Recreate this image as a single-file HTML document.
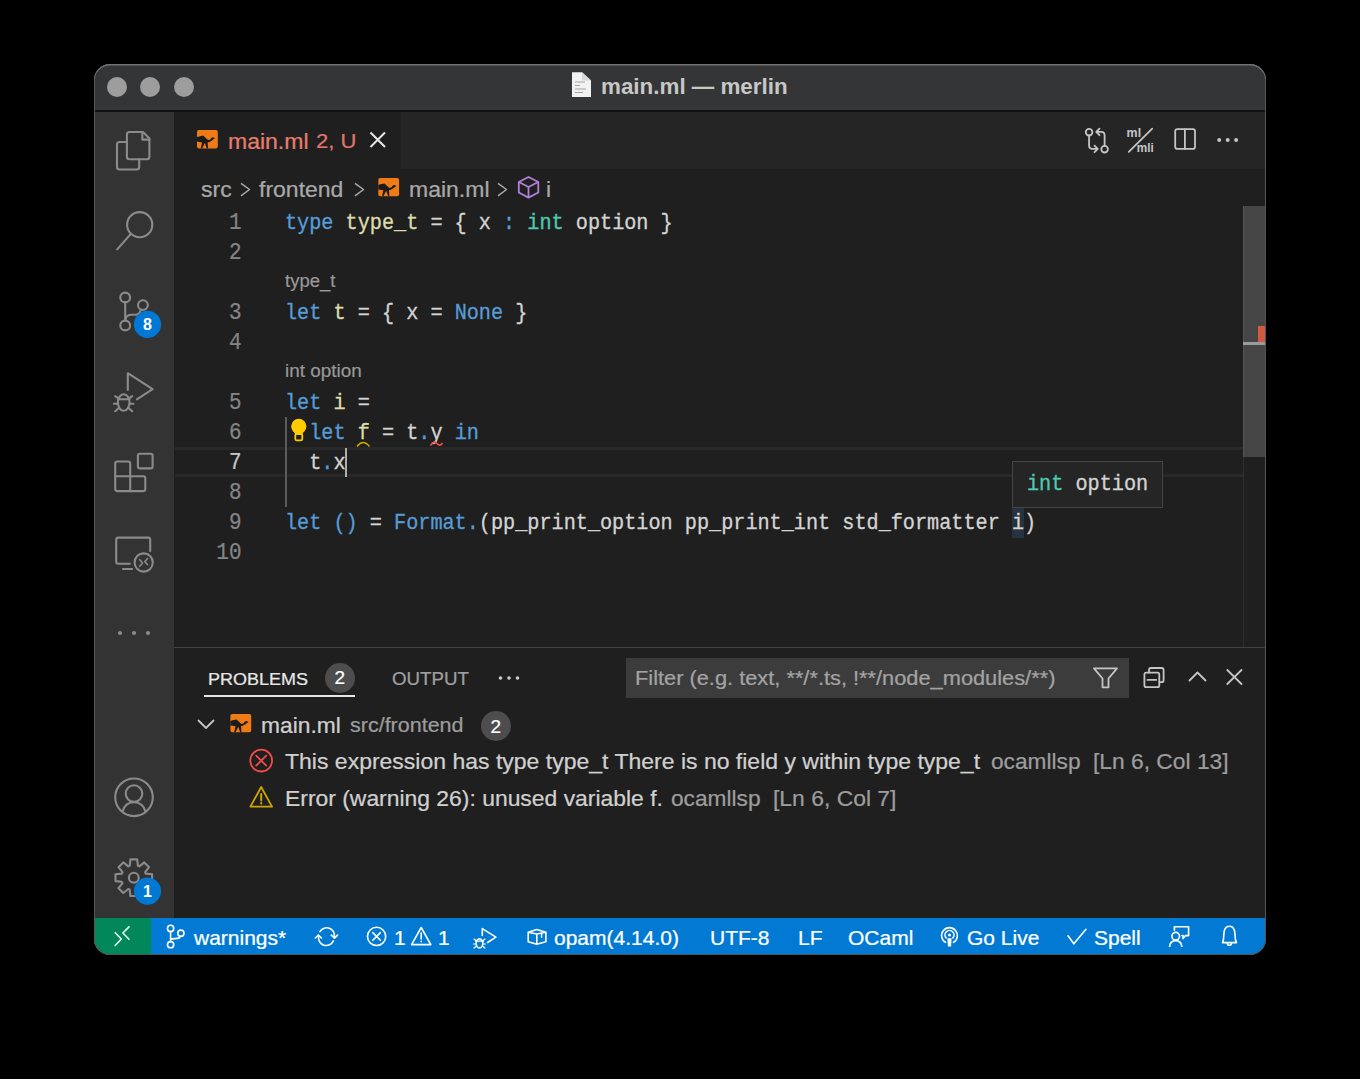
<!DOCTYPE html>
<html><head><meta charset="utf-8">
<style>
*{margin:0;padding:0;box-sizing:border-box}
html,body{width:1360px;height:1079px;background:#000;overflow:hidden;font-family:"Liberation Sans",sans-serif}
.a{position:absolute;white-space:pre}
#win{position:absolute;left:94px;top:64px;width:1172px;height:891px;border-radius:16px;overflow:hidden;background:#1f1f1f}
#wborder{position:absolute;left:94px;top:64px;width:1172px;height:891px;border-radius:16px;box-shadow:inset 0 1.5px 0 #737373, inset 0 0 0 1px #565656;pointer-events:none}
#title{position:absolute;left:0;top:0;width:1172px;height:48px;background:#343536;border-bottom:2px solid #111111}
.tl{position:absolute;top:13px;width:20px;height:20px;border-radius:50%;background:#9d9d9d}
#act{position:absolute;left:0;top:48px;width:80px;height:806px;background:#333333}
#tabs{position:absolute;left:80px;top:48px;width:1092px;height:57px;background:#252526}
#tab{position:absolute;left:0;top:0;width:227px;height:57px;background:#1f1f1f}
#status{position:absolute;left:0;top:854px;width:1172px;height:37px;background:#027ad3}
#remote{position:absolute;left:0;top:0;width:57px;height:37px;background:#02875b}
.code{position:absolute;transform:scaleY(1.12);transform-origin:0 20.4px;-webkit-text-stroke:0.3px currentColor;font-family:"Liberation Mono",monospace;font-size:20.2px;line-height:30px;color:#d4d4d4;white-space:pre}
.ln{position:absolute;font-family:"Liberation Mono",monospace;font-size:20.2px;line-height:30px;color:#858585;text-align:right;width:60px;left:181.5px;transform:translate(-0.5px,1px) scale(1.04,1.22);transform-origin:100% 20.3px;-webkit-text-stroke:0.2px currentColor}
.kw{color:#569cd6}.fn{color:#dcdcaa}.ty{color:#4ec9b0}.cn{color:#569cd6}
.lens{position:absolute;-webkit-text-stroke:0.2px currentColor;font-size:18.5px;line-height:18.5px;color:#999999;left:285px;white-space:pre}
.ui{position:absolute;white-space:pre;transform:scaleY(0.95);transform-origin:0 calc(11px + 0.3465em);-webkit-text-stroke:0.25px currentColor;font-size:22px;line-height:22px;color:#cccccc}
.st{position:absolute;white-space:pre;transform:scaleY(0.95);transform-origin:0 calc(10.5px + 0.3465em);-webkit-text-stroke:0.25px currentColor;font-size:21px;line-height:21px;color:#ffffff}
</style></head><body>
<div id="win">
  <div id="title">
    <div class="tl" style="left:13px"></div>
    <div class="tl" style="left:46px"></div>
    <div class="tl" style="left:80px"></div>
  </div>
  <div id="act"></div>
  <div id="tabs"><div id="tab"></div></div>
  <div id="status"><div id="remote"></div></div>
</div>

<!-- title text -->
<div class="a" style="left:601px;top:75.8px;font-size:22.4px;line-height:22px;font-weight:bold;color:#c7c7c7">main.ml — merlin</div>

<!-- tab -->
<div class="ui" style="left:228px;top:130px;font-size:23px;color:#e87d6e">main.ml</div>
<div class="ui" style="left:316px;top:129.5px;color:#e0756b">2, U</div>

<!-- breadcrumbs -->
<div class="ui" style="left:201px;top:177.5px;font-size:23px;color:#a9a9a9">src</div>
<div class="ui" style="left:259px;top:177.5px;font-size:23px;color:#a9a9a9">frontend</div>
<div class="ui" style="left:409px;top:177.5px;font-size:23px;color:#a9a9a9">main.ml</div>
<div class="ui" style="left:546px;top:177.5px;font-size:23px;color:#a9a9a9">i</div>

<!-- current line highlight -->
<div class="a" style="left:175px;top:447px;width:1068px;height:30px;border-top:3px solid #282828;border-bottom:3px solid #282828"></div>
<!-- indent guide -->
<div class="a" style="left:285px;top:417px;width:2px;height:90px;background:#5c5c5c"></div>
<div class="a" style="left:1011.5px;top:508px;width:12px;height:30px;background:#253240"></div>

<!-- line numbers -->
<div class="ln" style="top:207.6px">1</div>
<div class="ln" style="top:237.6px">2</div>
<div class="ln" style="top:297.6px">3</div>
<div class="ln" style="top:327.6px">4</div>
<div class="ln" style="top:387.6px">5</div>
<div class="ln" style="top:417.6px">6</div>
<div class="ln" style="top:447.6px;color:#c6c6c6">7</div>
<div class="ln" style="top:477.6px">8</div>
<div class="ln" style="top:507.6px">9</div>
<div class="ln" style="top:537.6px">10</div>

<!-- code -->
<div class="code" style="left:285px;top:208.6px"><span class="kw">type</span> <span class="fn">type_t</span> = { x <span class="kw">:</span> <span class="ty">int</span> option }</div>
<div class="lens" style="top:272px">type_t</div>
<div class="code" style="left:285px;top:298.6px"><span class="kw">let</span> <span class="fn">t</span> = { x = <span class="cn">None</span> }</div>
<div class="lens" style="top:362px;font-size:18.9px">int option</div>
<div class="code" style="left:285px;top:388.6px"><span class="kw">let</span> <span class="fn">i</span> =</div>
<div class="code" style="left:285px;top:418.6px">  <span class="kw">let</span> <span class="fn">f</span> = t<span class="kw">.</span>y <span class="kw">in</span></div>
<div class="code" style="left:285px;top:448.6px">  t<span class="kw">.</span>x</div>
<div class="code" style="left:285px;top:508.6px"><span class="kw">let</span> <span class="kw">()</span> = <span class="kw">Format.</span>(pp_print_option pp_print_int std_formatter i)</div>
<!-- cursor -->
<div class="a" style="left:345px;top:447.5px;width:1.6px;height:29px;background:#aeafad"></div>

<!-- hover -->
<div class="a" style="left:1012px;top:461px;width:151px;height:47px;background:#252526;border:1px solid #454545"></div>
<div class="code" style="left:1027px;top:470px"><span class="ty">int</span> option</div>

<!-- scrollbar -->
<div class="a" style="left:1243px;top:457px;width:1px;height:190px;background:#2e2e2e"></div>
<div class="a" style="left:1243px;top:206px;width:23px;height:251px;background:#454545;border-left:1px solid #555"></div>
<div class="a" style="left:1243px;top:342px;width:23px;height:3px;background:#9a9a9a"></div>
<div class="a" style="left:1258px;top:326px;width:8px;height:16px;background:#d25a41"></div>

<!-- panel -->
<div class="a" style="left:174px;top:647px;width:1092px;height:1px;background:#414141"></div>
<div class="ui" style="left:208px;top:669.5px;font-size:18px;line-height:18px;color:#e7e7e7">PROBLEMS</div>
<div class="a" style="left:325px;top:662.5px;width:30px;height:30px;border-radius:50%;background:#4d4d4d"></div>
<div class="ui" style="left:334.5px;top:668px;font-size:19px;line-height:19px;color:#ffffff">2</div>
<div class="a" style="left:204px;top:695px;width:151px;height:2px;background:#e7e7e7"></div>
<div class="ui" style="left:392px;top:669.5px;font-size:18.7px;line-height:18px;color:#a0a0a0">OUTPUT</div>
<div class="a" style="left:626px;top:658px;width:503px;height:40px;background:#3c3c3c"></div>
<div class="ui" style="left:635px;top:667px;font-size:21.8px;line-height:21px;color:#a3a3a3">Filter (e.g. text, **/*.ts, !**/node_modules/**)</div>

<div class="ui" style="left:261px;top:713.5px;font-size:22.8px;color:#d0d0d0">main.ml</div>
<div class="ui" style="left:350px;top:715px;font-size:21.5px;line-height:20px;color:#9d9d9d">src/frontend</div>
<div class="a" style="left:481px;top:711px;width:30px;height:30px;border-radius:50%;background:#4d4d4d"></div>
<div class="ui" style="left:490.5px;top:716.5px;font-size:19px;line-height:19px;color:#ffffff">2</div>

<div class="ui" style="left:285px;top:750px;font-size:23px;color:#d0d0d0">This expression has type type_t There is no field y within type type_t</div>
<div class="ui" style="left:991px;top:750px;font-size:22.7px;color:#9d9d9d">ocamllsp</div>
<div class="ui" style="left:1093px;top:750px;font-size:22.8px;color:#9d9d9d">[Ln 6, Col 13]</div>
<div class="ui" style="left:285px;top:787px;font-size:22.9px;color:#d0d0d0">Error (warning 26): unused variable f.</div>
<div class="ui" style="left:671px;top:787px;font-size:22.7px;color:#9d9d9d">ocamllsp</div>
<div class="ui" style="left:773px;top:787px;font-size:22.9px;color:#9d9d9d">[Ln 6, Col 7]</div>

<!-- status bar text -->
<div class="st" style="left:194px;top:927px">warnings*</div>
<div class="st" style="left:394px;top:927px">1</div>
<div class="st" style="left:438px;top:927px">1</div>
<div class="st" style="left:554px;top:927px">opam(4.14.0)</div>
<div class="st" style="left:710px;top:927px">UTF-8</div>
<div class="st" style="left:798px;top:927px">LF</div>
<div class="st" style="left:848px;top:927px">OCaml</div>
<div class="st" style="left:967px;top:927px">Go Live</div>
<div class="st" style="left:1094px;top:927px">Spell</div>


<svg class="a" style="left:0;top:0" width="1360" height="1079" viewBox="0 0 1360 1079">
<defs>
<g id="camel"><rect x="0" y="0" width="20.8" height="18.3" rx="1.8" fill="#ef7a16"/><path d="M0,7 L2.1,6.3 L6.1,5.4 L11,10 L13,9.6 L14.6,7.6 L15.9,7.1 L18.1,8.1 L16.6,9 L14.6,10.6 L12.3,11.8 L10.6,12.3 L11.1,18.3 L9.8,18.3 L7.9,12.8 L5.1,18.3 L3.8,18.3 L5.1,12.3 L0,11.5 Z" fill="#1b1b1b"/></g>
</defs>
<!-- title doc icon -->
<path d="M572,72.3 H582 L591,80.5 V97 H572 Z" fill="#f2f2f2"/>
<path d="M582,72.3 V80.5 H591" fill="#d8d8d8"/>
<g stroke="#9a9a9a" stroke-width="0.9"><path d="M575,82 H585 M575,85.5 H580 M575,89 H586 M575,92.5 H583"/></g>

<!-- activity bar icons -->
<g fill="none" stroke="#8b8b8b" stroke-width="2.1" stroke-linejoin="round" stroke-linecap="round">
 <path d="M129.4,132 H143 L149.4,138.4 V156.8 Q149.4,159.3 146.9,159.3 H129.4 Q126.9,159.3 126.9,156.8 V134.5 Q126.9,132 129.4,132 Z"/>
 <path d="M142.3,132 V139.6 H149.4"/>
 <path d="M126.9,142 H119.5 Q117,142 117,144.5 V167 Q117,169.5 119.5,169.5 H136.7 Q139.2,169.5 139.2,167 V159.3"/>
 <circle cx="139.7" cy="224.7" r="12.6"/>
 <path d="M130.2,234.6 L117.2,249.4"/>
 <circle cx="125.2" cy="297.5" r="4.9"/>
 <circle cx="125.2" cy="325.5" r="4.9"/>
 <circle cx="142.9" cy="305.1" r="4.9"/>
 <path d="M125.2,302.4 V320.6"/>
 <path d="M125.5,319.5 Q126,314.8 132,314.8 H135.5 Q139,314.8 141,309.8"/>
 <path d="M127.8,389.9 V373.2 L152.6,389.1 L136.9,399.3"/>
 <ellipse cx="123.7" cy="402.5" rx="5.8" ry="8.2"/>
 <path d="M118,399.3 H129.5 M115.2,396.1 L118.6,398.6 M132.2,396.1 L128.8,398.6 M114,403.8 H117.6 M133.4,403.8 H129.8 M115.2,411.2 L118.6,408.3 M132.2,411.2 L128.8,408.3"/>
 <path d="M117.2,461.5 H128.2 Q130.2,461.5 130.2,463.5 V476.2 H143.3 Q145.3,476.2 145.3,478.2 V489.1 Q145.3,491.1 143.3,491.1 H117.2 Q115.2,491.1 115.2,489.1 V463.5 Q115.2,461.5 117.2,461.5 Z"/>
 <path d="M115.2,476.2 H130.2 V491.1"/>
 <rect x="137.9" y="453.7" width="14.7" height="14.7" rx="2"/>
 <path d="M129.7,563.7 H118.2 Q116.2,563.7 116.2,561.7 V539.6 Q116.2,537.6 118.2,537.6 H148.2 Q150.2,537.6 150.2,539.6 V551.1"/>
 <path d="M123,569 H132.1"/>
 <circle cx="143.7" cy="562.5" r="9.1"/>
 <path d="M139.7,559.7 L142.6,563 L139.7,566.3 M147.6,558.5 L144.8,561.6 L147.6,564.7" stroke-width="1.6"/>
 <circle cx="134" cy="797.3" r="18.8"/>
 <circle cx="134" cy="793.6" r="8.3"/>
 <path d="M122.6,811.5 Q125,802.2 134,802.2 Q143,802.2 145.4,811.5"/>
 <path d="M129.7,865.8 L130.4,859.4 L137.2,859.4 L137.9,865.8 L139.3,866.4 L144.3,862.4 L149.1,867.2 L145.1,872.2 L145.7,873.6 L152.1,874.3 L152.1,881.1 L145.7,881.8 L145.1,883.2 L149.1,888.2 L144.3,893.0 L139.3,889.0 L137.9,889.6 L137.2,896.0 L130.4,896.0 L129.7,889.6 L128.3,889.0 L123.3,893.0 L118.5,888.2 L122.5,883.2 L121.9,881.8 L115.5,881.1 L115.5,874.3 L121.9,873.6 L122.5,872.2 L118.5,867.2 L123.3,862.4 L128.3,866.4Z"/>
 <circle cx="133.8" cy="877.7" r="4.9"/>
</g>
<g fill="#8b8b8b"><circle cx="120" cy="633" r="2.1"/><circle cx="134" cy="633" r="2.1"/><circle cx="148" cy="633" r="2.1"/></g>
<!-- badges -->
<circle cx="147.5" cy="324.4" r="13.6" fill="#0078d4"/>
<circle cx="147.5" cy="891.1" r="13.6" fill="#0078d4"/>

<!-- tab camel + close -->
<use href="#camel" x="197" y="130.1"/>
<path d="M370.5,132.5 L385,147 M385,132.5 L370.5,147" stroke="#e8e8e8" stroke-width="2"/>

<!-- editor actions -->
<g fill="none" stroke="#c5c5c5" stroke-width="1.8" stroke-linecap="round" stroke-linejoin="round">
 <circle cx="1089.1" cy="132.2" r="3.3"/>
 <circle cx="1104.6" cy="149.2" r="3.3"/>
 <path d="M1089.1,135.5 V145.5 Q1089.1,148.9 1092.5,148.9 H1097.5 M1094.5,145.6 L1097.8,148.9 L1094.5,152.2"/>
 <path d="M1104.6,145.9 V135.3 Q1104.6,131.9 1101.2,131.9 H1096.5 M1099.5,128.6 L1096.2,131.9 L1099.5,135.2"/>
 <path d="M1128.8,151.8 L1152.2,128.7"/>
 <rect x="1175.2" y="129.1" width="19.8" height="19.8" rx="2.2"/>
 <path d="M1184.9,129.1 V148.9"/>
</g>
<text x="1126.6" y="136.6" font-family="Liberation Sans" font-weight="bold" font-size="13.5" fill="#c5c5c5" textLength="14.5" lengthAdjust="spacingAndGlyphs">ml</text>
<text x="1136.8" y="152.4" font-family="Liberation Sans" font-weight="bold" font-size="13.5" fill="#c5c5c5" textLength="17" lengthAdjust="spacingAndGlyphs">mli</text>
<g fill="#c5c5c5"><circle cx="1219.2" cy="139.9" r="2"/><circle cx="1227.7" cy="139.9" r="2"/><circle cx="1236.1" cy="139.9" r="2"/></g>

<!-- breadcrumbs -->
<g fill="none" stroke="#a9a9a9" stroke-width="1.5" stroke-linejoin="round">
 <path d="M241,183.3 L249.5,189.5 L241,195.8"/>
 <path d="M355,183.3 L363.5,189.5 L355,195.8"/>
 <path d="M498,183.3 L506.5,189.5 L498,195.8"/>
</g>
<use href="#camel" x="378.3" y="178"/>
<g fill="none" stroke="#b180d7" stroke-width="1.8" stroke-linejoin="round">
 <path d="M528.5,177 L538.3,182 V192.5 L528.5,197.6 L518.8,192.5 V182 Z"/>
 <path d="M518.8,182 L528.5,187 L538.3,182 M528.5,187 V197.6"/>
</g>

<!-- lightbulb -->
<g fill="#ffcc00">
 <circle cx="298.8" cy="426.3" r="7.6"/>
 <path d="M293,430.5 Q295.5,433.5 295.5,435 H302 Q302,433.5 304.6,430.5 Z"/>
</g>
<rect x="295.3" y="434" width="7" height="6.3" rx="1.2" fill="none" stroke="#ffcc00" stroke-width="1.8"/>
<!-- squiggles -->
<path d="M357,446.5 Q363,438.5 369.5,446.5" fill="none" stroke="#cca700" stroke-width="1.6"/>
<path d="M430.5,445.5 Q434,440 437,443.5 Q440,447 442.5,443" fill="none" stroke="#f14c4c" stroke-width="1.6"/>

<!-- panel icons -->
<g fill="#cccccc"><circle cx="500.5" cy="678" r="1.8"/><circle cx="509" cy="678" r="1.8"/><circle cx="517.5" cy="678" r="1.8"/></g>
<g fill="none" stroke="#c5c5c5" stroke-width="1.8" stroke-linejoin="round" stroke-linecap="round">
 <path d="M1094,668.3 H1117 L1108.5,678.5 V687.3 H1102.5 V678.5 Z"/>
 <path d="M1149,672.6 V670 Q1149,668 1151,668 H1161.6 Q1163.6,668 1163.6,670 V680.2 Q1163.6,682.2 1161.6,682.2 H1159.5"/>
 <rect x="1144.4" y="672.6" width="14.9" height="14.6" rx="2"/>
 <path d="M1147.5,679.9 H1156.2"/>
 <path d="M1189.5,680.5 L1197.5,672.5 L1205.5,680.5"/>
 <path d="M1227.3,670 L1241.5,684 M1241.5,670 L1227.3,684"/>
 <path d="M198.5,720.5 L206,728 L213.5,720.5"/>
</g>
<use href="#camel" x="230.4" y="714"/>
<g fill="none" stroke-width="1.8" stroke-linecap="round" stroke-linejoin="round">
 <circle cx="261.2" cy="760.6" r="10.9" stroke="#f14c4c"/>
 <path d="M256.2,755.6 L266.2,765.6 M266.2,755.6 L256.2,765.6" stroke="#f14c4c"/>
 <path d="M261.2,787 L272,806.6 H250.4 Z" stroke="#cca700"/>
 <path d="M261.2,794 V800.5 M261.2,803 V803.6" stroke="#cca700" stroke-width="2"/>
</g>

<!-- status bar icons -->
<g fill="none" stroke="#ffffff" stroke-width="1.6" stroke-linecap="round" stroke-linejoin="round">
 <path d="M115.2,932.8 L121.3,939 L115.2,945.5 M129,926.9 L122.9,933 L129,939.3" stroke="#e6fff4"/>
 <circle cx="170.6" cy="928.4" r="3.1"/>
 <circle cx="170.6" cy="944.7" r="3.1"/>
 <circle cx="180.9" cy="933.2" r="3.1"/>
 <path d="M170.6,931.5 V941.6 M170.8,939.5 Q171.5,938.6 175,938.6 Q180,938.6 180.6,936.3"/>
 <path d="M319.9,931.6 A7.8,7.8 0 0 1 334.3,937 M333.4,940.9 A7.8,7.8 0 0 1 318.6,936.3"/>
 <path d="M331.3,935.1 L334.5,938.1 L337.6,935.1 M315.3,938 L318.4,935 L321.5,938"/>
 <circle cx="376.6" cy="936.4" r="9.1"/>
 <path d="M372.8,932.6 L380.4,940.2 M380.4,932.6 L372.8,940.2"/>
 <path d="M421.2,927.5 L430.8,944.6 H411.6 Z"/>
 <path d="M421.2,933 V939 M421.2,941.4 V941.8"/>
 <path d="M482.3,935.5 V928.6 L495.9,937.1 L487.6,942.5"/>
 <ellipse cx="479.5" cy="943.4" rx="3.3" ry="4.5"/>
 <path d="M475.5,941.2 H483.5 M474,939 L476,940.5 M485,939 L483,940.5 M473.5,944 H476 M485.5,944 H483 M474,948 L476,946.5 M485,948 L483,946.5" stroke-width="1.2"/>
 <path d="M528.2,932.2 L536.8,929.5 L545.9,932.2 V941.8 L536.8,944.2 L528.2,941.8 Z M528.2,932.2 L536.8,934 L545.9,932.2 M536.8,934 V944.2"/>
 <path d="M541.6,933.3 V937.3" stroke-width="1.4"/>
 <path d="M945.5,942.3 A7.9,7.9 0 1 1 953.5,942.3 M946.2,938 A4.5,4.5 0 1 1 952.8,938"/>
 <circle cx="949.5" cy="935" r="1.5" fill="#fff" stroke="none"/>
 <path d="M947.4,938.2 H951.6 L951.1,946.6 H947.9 Z" fill="#fff" stroke="none"/>
 <path d="M1068,935.8 L1073.8,943.8 L1086,929.3"/>
 <circle cx="1175.7" cy="936.2" r="3.8"/>
 <path d="M1169.6,946.3 Q1170.5,940.6 1175.7,940.6 Q1180.9,940.6 1181.8,946.3"/>
 <path d="M1174.4,930.2 V926.8 H1188.6 V935.6 H1185.5 L1183,938.6 V935.6 H1182"/>
 <path d="M1222.5,942.6 Q1223.8,940 1223.8,935 Q1223.8,926.3 1229.4,926.3 Q1235,926.3 1235,935 Q1235,940 1236.5,942.6 Z"/>
 <path d="M1227.4,943.3 A2,2 0 0 0 1231.4,943.3"/>
</g>
</svg>

<div class="a" style="left:143px;top:317px;font-size:16px;line-height:16px;font-weight:bold;color:#fff">8</div>
<div class="a" style="left:143px;top:884px;font-size:16px;line-height:16px;font-weight:bold;color:#fff">1</div>
<div id="wborder"></div>
</body></html>
